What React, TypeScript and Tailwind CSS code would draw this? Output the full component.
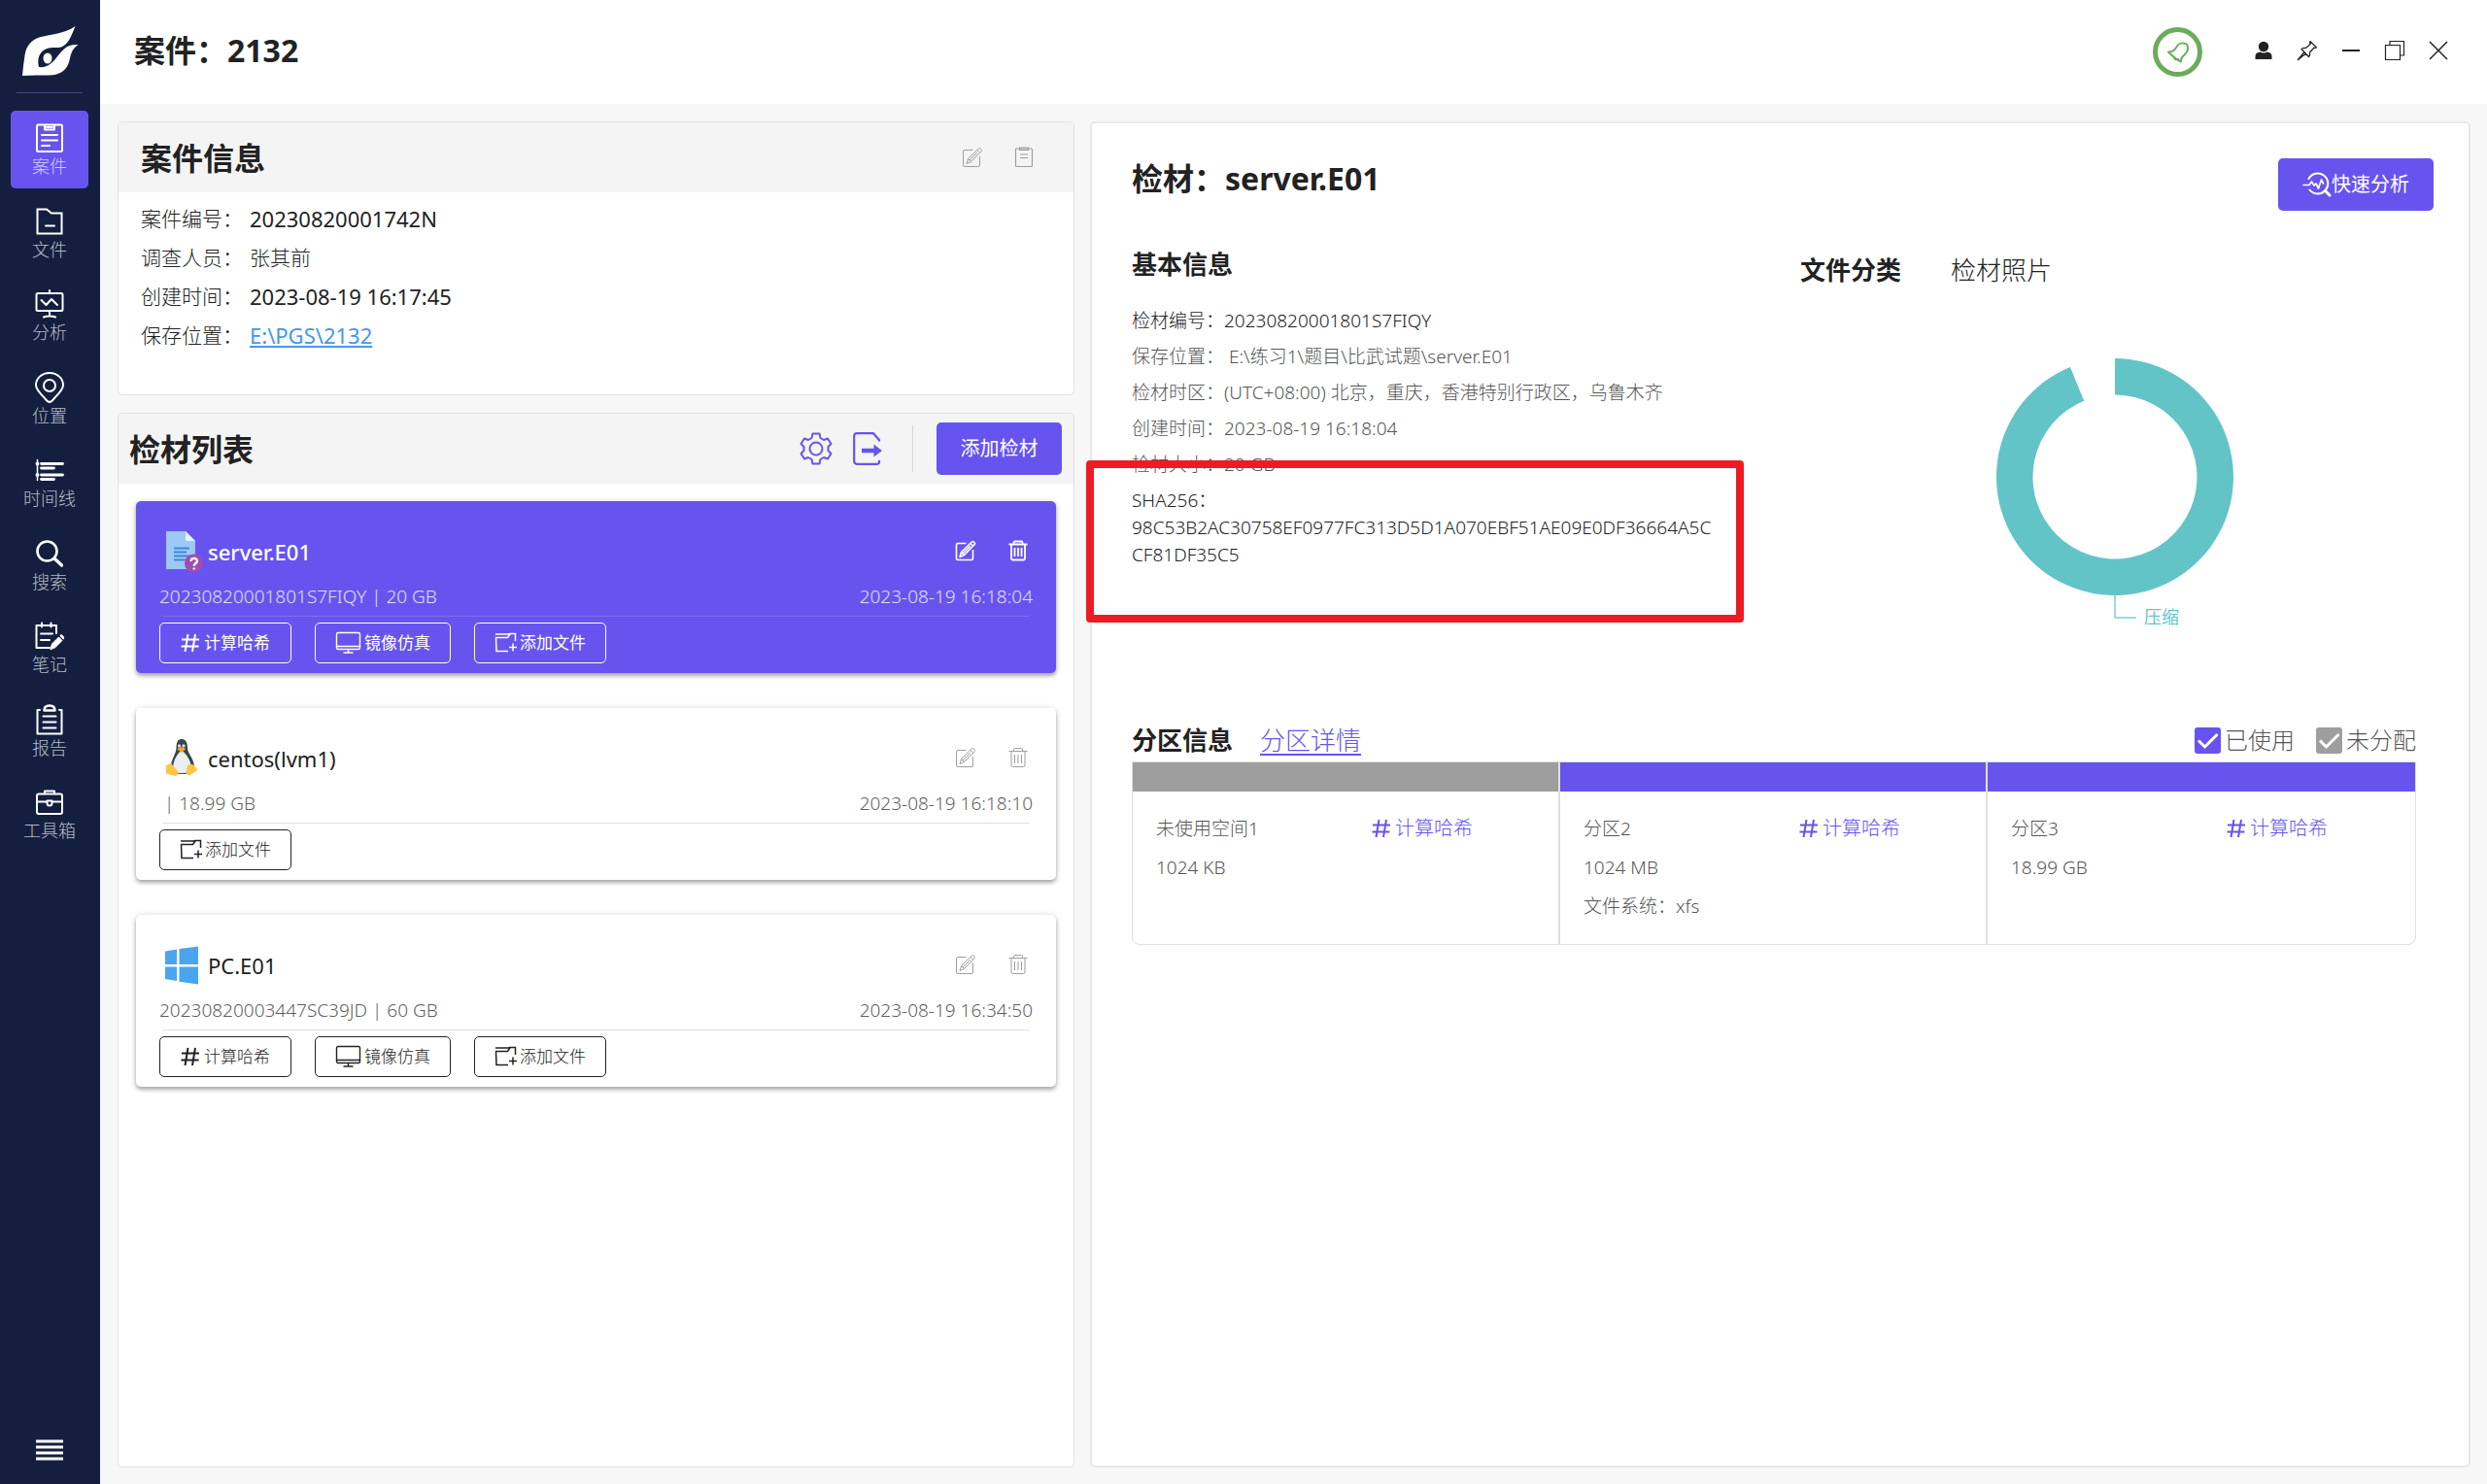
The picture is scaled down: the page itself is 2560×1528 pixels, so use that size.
import React, { useState } from 'react';

type IconProps = { className?: string };

const stroke = {
  fill: 'none',
  stroke: 'currentColor',
  strokeWidth: 2,
  strokeLinecap: 'round' as const,
  strokeLinejoin: 'round' as const,
};

function Logo() {
  return (
    <svg viewBox="0 0 58 52" className="w-[58px] h-[52px]" fill="#fff" aria-hidden="true">
      <path
        fillRule="evenodd"
        d="M54.500 0C43 8 29 8.500 19 11C9 14 4 20 2.500 30C1.300 37 0.700 44 0 51C9 50 18 50.500 27 50.500C38 50.500 45 46 48 37C50 30 50 24 57.500 19C46 18 42 24 37 30C31 38 26 43 17 42C15 34 17 25 27 22.500C33 21.500 38 23 42 20.500C49 16 51 8 54.500 0Z"
      />
      <ellipse cx="26" cy="33" rx="4.500" ry="5.500" />
    </svg>
  );
}

function CaseIcon() {
  return (
    <svg viewBox="0 0 28 30" className="w-7 h-[30px]" {...stroke}>
      <rect x="1" y="1.500" width="26" height="27.500" rx="1.500" />
      <path d="M9 2v4.500h10V2M11 4h6M6 12h16M6 17.500h16M6 23h8" />
    </svg>
  );
}

function FolderIcon() {
  return (
    <svg viewBox="0 0 28 30" className="w-7 h-[30px]" {...stroke} strokeLinejoin="miter">
      <path d="M1.500 2.500H11L16 6.500H26.500V27.500H1.500Z" />
      <path d="M10 19.500h9" strokeWidth="2" />
    </svg>
  );
}

function BoardIcon() {
  return (
    <svg viewBox="0 0 30 30" className="w-[30px] h-[30px]" {...stroke}>
      <rect x="1.500" y="4" width="27" height="18" rx="1.500" />
      <path d="M15 1v2M6.500 11l5 5 5.500-6 6 6" />
      <path d="M15 22v5M9 28.500c3-1.500 9-1.500 12 0" />
    </svg>
  );
}

function PinMapIcon() {
  return (
    <svg viewBox="0 0 30 32" className="w-[30px] h-8" {...stroke}>
      <path d="M15 31c-2 0-3-1.500-5-4C5 21.500 1 18 1 13.500C1 6.500 7 1 15 1s14 5.500 14 12.500C29 18 25 21.500 20 27c-2 2.500-3 4-5 4Z" />
      <circle cx="15" cy="14" r="6" />
    </svg>
  );
}

function TimelineIcon() {
  return (
    <svg viewBox="0 0 30 24" className="w-[30px] h-6" fill="none" stroke="currentColor" strokeLinecap="round">
      <path d="M2.500 1.500v21" strokeWidth="1.500" />
      <path d="M6.500 5.500h22M6.500 17h22" strokeWidth="2.800" />
      <path d="M6.500 10h13M6.500 21.500h13" strokeWidth="2.800" />
      <circle cx="2.500" cy="5.500" r="1.200" fill="currentColor" strokeWidth="1.500" />
      <circle cx="2.500" cy="17" r="1.200" fill="currentColor" strokeWidth="1.500" />
    </svg>
  );
}

function SearchIcon() {
  return (
    <svg viewBox="0 0 28 28" className="w-7 h-7" fill="none" stroke="currentColor" strokeLinecap="round">
      <circle cx="11.500" cy="11.500" r="10" strokeWidth="2.600" />
      <path d="M19 19l7.500 7" strokeWidth="3.400" />
    </svg>
  );
}

function NoteIcon() {
  return (
    <svg viewBox="0 0 30 30" className="w-[30px] h-[30px]" {...stroke}>
      <path d="M22 12V4H1.500V27H15" />
      <path d="M7 1.500v4M16.500 1.500v4M6 12.500h12M6 19h9" />
      <path d="M16 28.500l1.500-5.500 7-7 3.500 3.500-7 7Z" fill="currentColor" strokeWidth="1" />
      <path d="M27 14.500l2.500 2.500" strokeWidth="2.500" />
    </svg>
  );
}

function ReportIcon() {
  return (
    <svg viewBox="0 0 28 32" className="w-7 h-8" {...stroke}>
      <path d="M4 6H1.500V30.500H26.500V6H24" />
      <path d="M8.500 6.500c0-3 2-5 5.500-5s5.500 2 5.500 5Z" strokeWidth="2.500" />
      <path d="M7.500 12.500h13M7.500 18.500h13M7.500 24.500h13" />
    </svg>
  );
}

function ToolboxIcon() {
  return (
    <svg viewBox="0 0 28 26" className="w-7 h-[26px]" {...stroke}>
      <rect x="1" y="4.500" width="26" height="20.500" rx="2" />
      <path d="M9 4V1.500h10V4M1 12.500h10M17 12.500h10" />
      <path d="M11.500 11.500v2.500a2.500 2.500 0 0 0 5 0v-2.500Z" />
    </svg>
  );
}

function EditIcon({ className = '' }: IconProps) {
  return (
    <svg viewBox="0 0 22 22" className={`w-[22px] h-[22px] ${className}`} fill="none" stroke="currentColor" strokeLinejoin="round">
      <path d="M11.500 3.500H3A1.500 1.500 0 0 0 1.500 5V19A1.500 1.500 0 0 0 3 20.500H17A1.500 1.500 0 0 0 18.500 19V10" />
      <path d="M5 17.500l1.500-5L17.500 1.800c1-.9 3.800 1.500 2.800 2.700L9.500 15.500ZM16 3.500l2.800 2.700M6.500 12.500l3 3M8 14l8-8" />
    </svg>
  );
}

function ClipIcon() {
  return (
    <svg viewBox="0 0 20 22" className="w-5 h-[22px]" fill="none" stroke="currentColor" strokeWidth="1.200">
      <rect x="1.500" y="2" width="17" height="18.500" rx="1" />
      <path d="M5.500 1h9v2.500h-9ZM6 8h8M6 11.500h8" />
    </svg>
  );
}

function TrashIcon({ className = '' }: IconProps) {
  return (
    <svg viewBox="0 0 22 22" className={`w-[22px] h-[22px] ${className}`} fill="none" stroke="currentColor">
      <path d="M1.500 4.500h19M6.500 4V2.500A1 1 0 0 1 7.500 1.500h7A1 1 0 0 1 15.500 2.500V4M4 4.500V19A1.500 1.500 0 0 0 5.500 20.500h11A1.500 1.500 0 0 0 18 19V4.500M7.500 8v9M11 8v9M14.500 8v9" />
    </svg>
  );
}

function GearIcon() {
  return (
    <svg viewBox="0 0 34 34" className="w-[34px] h-[34px]" fill="none" stroke="currentColor" strokeWidth="2" strokeLinejoin="round">
      <path d="M13.500 1.500h7l1 4.500 3.500 2 4-1.500 3.500 5.500-3 3v4l3 3-3.500 5.500-4-1.500-3.500 2-1 4.500h-7l-1-4.500-3.500-2-4 1.500-3.500-5.500 3-3v-4l-3-3 3.500-5.500 4 1.500 3.500-2Z" />
      <circle cx="17" cy="17" r="6.500" />
    </svg>
  );
}

function ExportIcon() {
  return (
    <svg viewBox="0 0 30 34" className="w-[30px] h-[34px]" fill="none" stroke="currentColor" strokeWidth="2.200">
      <path d="M27 9.500V8L21 1.200H4A3 3 0 0 0 1.200 4V30A3 3 0 0 0 4 32.800H25A2 2 0 0 0 27 31V29" />
      <path d="M9 19h14" strokeWidth="4.500" />
      <path d="M21.500 12.500L30 19L21.500 25.500Z" fill="currentColor" stroke="none" />
    </svg>
  );
}

function HashIcon() {
  return (
    <svg viewBox="0 0 20 20" className="w-5 h-5 shrink-0" fill="none" stroke="currentColor" strokeWidth="2">
      <path d="M7.500 1L4.500 19M15 1L12 19M1 6.500h18M.500 13.500h18" />
    </svg>
  );
}

function MonitorIcon() {
  return (
    <svg viewBox="0 0 28 24" className="w-7 h-6 shrink-0" fill="none" stroke="currentColor" strokeWidth="1.400">
      <rect x="1.500" y="1.500" width="24" height="17" rx="1.500" />
      <path d="M2 15.500h23M13.500 18.500v3M8.500 22h10" />
    </svg>
  );
}

function FolderPlusIcon() {
  return (
    <svg viewBox="0 0 24 22" className="w-6 h-[22px] shrink-0" fill="none" stroke="currentColor" strokeWidth="1.500">
      <path d="M1 2h13L16 1.500h5.500V9M1 5.500h12.500L16 2M1.500 5.500L2 19.500H14M15 15.500h8M19 11.500v8" />
    </svg>
  );
}

function QuickIcon() {
  return (
    <svg viewBox="0 0 30 26" className="w-[30px] h-[26px] shrink-0" fill="none" stroke="currentColor" strokeWidth="2" strokeLinecap="round" strokeLinejoin="round">
      <path d="M6.500 7A10.500 10.500 0 1 1 7.500 18.500" />
      <path d="M1 13.500h6l2.500-3.500 2.500 4 2-2 2.500 5 3-9 2 4" strokeWidth="1.700" />
      <path d="M23.500 19.500l4.500 4.500" strokeWidth="3" />
    </svg>
  );
}

function DocIcon() {
  return (
    <svg viewBox="0 0 40 44" className="w-10 h-11">
      <path d="M1 1h20l10 10v29H1Z" fill="#9cc9f5" />
      <path d="M21 1l10 10H21Z" fill="#e3f2fd" />
      <path d="M9 18.500h16M9 22.500h13M9 26.500h16M9 30.500h13" stroke="#3f87d6" strokeWidth="2" />
      <circle cx="29.500" cy="34" r="9.500" fill="#a04cb4" />
      <path d="M26.500 32c0-4 6.500-4 6.500-.3 0 2.300-3.300 2.300-3.300 5M29.700 38.500v2" stroke="#fff" strokeWidth="2.300" fill="none" />
    </svg>
  );
}

function TuxIcon() {
  return (
    <svg viewBox="0 0 40 44" className="w-10 h-11">
      <path d="M17 2c4.500 0 6 4 6 9 0 6 7 11 7 20 0 5-4 7-13 7S6 35 6 30c0-7 5.500-13 5.500-19 0-5 1-9 5.500-9Z" fill="#37474f" />
      <path d="M17 14c5 3 10 11 10 18 0 4-4.500 5-10 5s-9-1-9-5c0-7 4-15 9-18Z" fill="#eceff1" />
      <circle cx="14.500" cy="9" r="1.700" fill="#cfd8dc" />
      <circle cx="19" cy="9" r="1.700" fill="#cfd8dc" />
      <path d="M12.500 12.500c2-3 6-3 8.500 0l-4 3.500Z" fill="#f5a623" />
      <path d="M6 27l7 8c1 3-1 5-3 5L1 37.500V29Z" fill="#ffc544" />
      <path d="M28 28c2 2 4 3 5 5 0 2-5 4-7 6-3 1-5-1-4-4 0-3 1-6 2-7Z" fill="#ffc544" />
    </svg>
  );
}

function WindowsIcon() {
  return (
    <svg viewBox="0 0 40 44" className="w-10 h-11" fill="#4aa5ee">
      <path d="M0 7.500L12 5.500V21H0ZM14.500 5L34 2.500V21H14.500ZM0 23.500H12V38L0 36ZM14.500 23.500H34V41.500L14.500 38.800Z" />
    </svg>
  );
}

const NAV = [
  { label: '案件', icon: <CaseIcon /> },
  { label: '文件', icon: <FolderIcon /> },
  { label: '分析', icon: <BoardIcon /> },
  { label: '位置', icon: <PinMapIcon /> },
  { label: '时间线', icon: <TimelineIcon /> },
  { label: '搜索', icon: <SearchIcon /> },
  { label: '笔记', icon: <NoteIcon /> },
  { label: '报告', icon: <ReportIcon /> },
  { label: '工具箱', icon: <ToolboxIcon /> },
];

function Sidebar() {
  const [active, setActive] = useState('案件');
  return (
    <aside className="w-[103px] pr-px shrink-0 bg-[#141f40] flex flex-col items-center">
      <div className="w-[68px] h-24 pt-[27px] pl-[2px] flex justify-center border-b border-[#454c80]">
        <Logo />
      </div>
      <nav className="mt-[18px] h-[764px] flex flex-col justify-between">
        {NAV.map((n) => (
          <button
            key={n.label}
            onClick={() => setActive(n.label)}
            className={`w-20 h-20 rounded-[5px] flex flex-col items-center text-white ${
              active === n.label ? 'bg-[#6754ee]' : ''
            }`}
          >
            <span className="h-8 mt-3 flex items-center justify-center">{n.icon}</span>
            <span className="text-[18px] leading-[26px] text-white/70 font-light">{n.label}</span>
          </button>
        ))}
      </nav>
      <button aria-label="菜单" className="mt-auto mb-6 text-white">
        <svg viewBox="0 0 28 22" className="w-7 h-[22px]" stroke="currentColor" strokeWidth="3">
          <path d="M0 2h28M0 8h28M0 14h28M0 20h28" />
        </svg>
      </button>
    </aside>
  );
}

function TopBar() {
  return (
    <header className="h-[107px] bg-white flex items-center justify-between pl-[35px] pr-[39px]">
      <h1 className="pb-[3px] text-[32px] leading-10 font-bold">案件：2132</h1>
      <div className="flex items-center">
        <button aria-label="通知" className="w-[51px] h-[51px] mr-[52px] rounded-full border-[5px] border-[#69ad5c] text-[#69ad5c] flex items-center justify-center">
          <svg viewBox="0 0 22 22" className="w-[22px] h-[22px]" {...stroke}>
            <path d="M1 10.500c4 0 6-1 8-4.500 2-4 6-5.500 10-4l1.500 1.500c1.500 4 .5 7-3 10-3 2.500-4 4-3.500 7C9 18 4.500 14 1 10.500Z" />
            <path d="M7 17c1 1.500 3 1.800 4 .8" />
          </svg>
        </button>
        <div className="flex items-center gap-[23px] -mt-1">
          <button aria-label="用户">
            <svg viewBox="0 0 22 22" className="w-[22px] h-[22px]" fill="currentColor">
              <circle cx="11" cy="7" r="5.200" />
              <path d="M2.500 20v-3c0-3 2-4 5-4.500 2 1.300 5 1.300 7 0 3 .5 5 1.500 5 4.500v3Z" />
            </svg>
          </button>
          <button aria-label="置顶">
            <svg viewBox="0 0 22 22" className="w-[22px] h-[22px]" fill="none" stroke="currentColor" strokeWidth="1.200" strokeLinejoin="round">
              <path d="M14 1.500l6.500 6.500-1.500.5-1-.5-4.500 5c.5 2 0 3.500-1 4.500L5 9.500C6.500 8.500 8 8 9.500 8.500l5-4.500-1-1ZM8 12.500l-7 8.500M9.500 14l-8.500 7" />
            </svg>
          </button>
          <button aria-label="最小化">
            <svg viewBox="0 0 22 22" className="w-[22px] h-[22px]" stroke="currentColor" strokeWidth="2">
              <path d="M2 11h18" />
            </svg>
          </button>
          <button aria-label="还原">
            <svg viewBox="0 0 22 22" className="w-[22px] h-[22px]" fill="none" stroke="currentColor" strokeWidth="1.200">
              <path d="M1.500 5.500h15v15h-15ZM6 5.500v-4h14.500V16h-4" />
            </svg>
          </button>
          <button aria-label="关闭">
            <svg viewBox="0 0 22 22" className="w-[22px] h-[22px]" stroke="currentColor" strokeWidth="1.500">
              <path d="M2 2l18 18M20 2L2 20" />
            </svg>
          </button>
        </div>
      </div>
    </header>
  );
}

const CASE_INFO = [
  { label: '案件编号：', value: '20230820001742N', className: 'text-[22px]' },
  { label: '调查人员：', value: '张其前', className: 'font-light' },
  { label: '创建时间：', value: '2023-08-19 16:17:45', className: 'text-[22px]' },
];

function CaseInfo() {
  return (
    <section className="h-[282px] bg-white border border-[#e0e0e0] rounded-[5px] overflow-hidden">
      <div className="h-[72px] bg-[#f4f4f4] pl-[23px] pr-[41px] flex items-center justify-between">
        <h2 className="pt-[2px] text-[32px] leading-10 font-bold">案件信息</h2>
        <div className="flex items-center gap-8 text-[#9e9e9e]">
          <button aria-label="编辑案件"><EditIcon /></button>
          <button aria-label="案件详情"><ClipIcon /></button>
        </div>
      </div>
      <dl className="pl-[23px] pt-[7px] grid grid-cols-[112px_1fr] text-[21px] leading-10">
        {CASE_INFO.map((r) => (
          <React.Fragment key={r.label}>
            <dt className="font-light">{r.label}</dt>
            <dd className={`leading-10 ${r.className}`}>{r.value}</dd>
          </React.Fragment>
        ))}
        <dt className="font-light">保存位置：</dt>
        <dd className="text-[22px] leading-10">
          <a href="#folder" className="text-[#4596ee] underline underline-offset-2 decoration-2">E:\PGS\2132</a>
        </dd>
      </dl>
    </section>
  );
}

interface Evidence {
  name: string;
  meta: string;
  time: string;
  icon: React.ReactNode;
  actions: string[];
}

const EVIDENCE: Evidence[] = [
  {
    name: 'server.E01',
    meta: '20230820001801S7FIQY | 20 GB',
    time: '2023-08-19 16:18:04',
    icon: <DocIcon />,
    actions: ['hash', 'sim', 'add'],
  },
  {
    name: 'centos(lvm1)',
    meta: '\u00a0| 18.99 GB',
    time: '2023-08-19 16:18:10',
    icon: <TuxIcon />,
    actions: ['add'],
  },
  {
    name: 'PC.E01',
    meta: '20230820003447SC39JD | 60 GB',
    time: '2023-08-19 16:34:50',
    icon: <WindowsIcon />,
    actions: ['hash', 'sim', 'add'],
  },
];

const ACTIONS: Record<string, { label: string; icon: React.ReactNode; className: string }> = {
  hash: { label: '计算哈希', icon: <HashIcon />, className: 'w-[136px] gap-1' },
  sim: { label: '镜像仿真', icon: <MonitorIcon />, className: 'w-[140px] gap-[2px]' },
  add: { label: '添加文件', icon: <FolderPlusIcon />, className: 'w-[136px] gap-[2px]' },
};

function EvidenceCard({ item, selected, onSelect }: { item: Evidence; selected: boolean; onSelect: () => void }) {
  return (
    <li
      onClick={onSelect}
      className={`h-[177px] rounded-[5px] px-6 shadow-[0_3px_4px_rgba(0,0,0,0.3),0_0_6px_rgba(0,0,0,0.12)] ${
        selected ? 'bg-[#6754ee] text-white' : 'bg-white'
      }`}
    >
      <div className="h-[82px] pt-[22px] pl-[6px] pr-1 flex items-center">
        {item.icon}
        <h3 className={`ml-1 text-[22px] leading-8 ${selected ? 'font-medium' : ''}`}>{item.name}</h3>
        <div className={`ml-auto flex gap-8 -mt-[2px] ${selected ? '' : 'text-[#9e9e9e]'}`}>
          <button aria-label={`编辑 ${item.name}`}>
            <EditIcon className={selected ? 'stroke-[1.6]' : ''} />
          </button>
          <button aria-label={`删除 ${item.name}`}>
            <TrashIcon className={selected ? 'stroke-[1.8]' : ''} />
          </button>
        </div>
      </div>
      <div className={`h-9 pb-1 flex items-center justify-between text-[19px] leading-7 font-light ${selected ? 'text-white/80' : 'text-[#5f5f5f]'}`}>
        <span>{item.meta}</span>
        <span>{item.time}</span>
      </div>
      <div className={`mx-1 border-t ${selected ? 'border-white/15' : 'border-[#dcdcdc]'}`} />
      <div className="mt-[6px] flex gap-6">
        {item.actions.map((a) => (
          <button
            key={a}
            className={`h-[42px] rounded-[5px] border flex items-center justify-center text-[17px] leading-6 ${ACTIONS[a].className} ${
              selected ? 'border-white' : 'border-[#222] font-light'
            }`}
          >
            {ACTIONS[a].icon}
            {ACTIONS[a].label}
          </button>
        ))}
      </div>
    </li>
  );
}

function EvidenceList() {
  const [selected, setSelected] = useState('server.E01');
  return (
    <section className="grow bg-white border border-[#e0e0e0] rounded-[5px] overflow-hidden">
      <div className="h-[72px] bg-[#f4f4f4] pl-[11px] pr-3 flex items-center">
        <h2 className="pt-[2px] text-[32px] leading-10 font-bold">检材列表</h2>
        <div className="ml-auto flex items-center text-[#6754ee]">
          <button aria-label="设置"><GearIcon /></button>
          <button aria-label="导出" className="ml-[21px]"><ExportIcon /></button>
          <div className="ml-[31px] mr-6 w-px h-12 bg-[#d8d8d8]" />
          <button className="w-[129px] h-[54px] rounded-[5px] bg-[#6754ee] text-white text-[20px]">添加检材</button>
        </div>
      </div>
      <ul className="p-[18px] flex flex-col gap-9">
        {EVIDENCE.map((e) => (
          <EvidenceCard key={e.name} item={e} selected={selected === e.name} onSelect={() => setSelected(e.name)} />
        ))}
      </ul>
    </section>
  );
}

function FileChart() {
  // Single category ring, drawn clockwise from 12 o'clock to 338 degrees.
  return (
    <svg viewBox="0 0 260 290" className="w-[260px] h-[290px]" role="img" aria-label="文件分类">
      <path
        d="M125 3A122 122 0 1 1 79 12L93.200 46.700A84.500 84.500 0 1 0 125 40.500Z"
        fill="#63c4c7"
      />
      <path d="M125 247v23h22" fill="none" stroke="#7fd0d2" strokeWidth="1.500" />
      <text x="155" y="276" fontSize="18" fill="#63c4c7">压缩</text>
    </svg>
  );
}

const BASIC_INFO = [
  { label: '检材编号：', value: '20230820001801S7FIQY', strong: true },
  { label: '保存位置：', value: '\u00a0E:\\练习1\\题目\\比武试题\\server.E01' },
  { label: '检材时区：', value: '(UTC+08:00) 北京，重庆，香港特别行政区，乌鲁木齐' },
  { label: '创建时间：', value: '2023-08-19 16:18:04' },
  { label: '检材大小：', value: '20 GB' },
];

function BasicInfo() {
  return (
    <div className="w-[688px] shrink-0">
      <h3 className="text-[26px] leading-9 font-bold">基本信息</h3>
      <div className="mt-[22px] text-[19px] text-[#555] font-light">
        {BASIC_INFO.map((r) => (
          <p key={r.label} className={`leading-[37px] ${r.strong ? 'text-[#222]' : ''}`}>
            {r.label}
            {r.value}
          </p>
        ))}
        <div className="relative mt-1 w-[602px] leading-7 text-[#222] break-all">
          SHA256：
          <br />
          98C53B2AC30758EF0977FC313D5D1A070EBF51AE09E0DF36664A5CCF81DF35C5
          {/* highlight frame around the digest */}
          <div className="absolute -left-[47px] -top-[27px] w-[677px] h-[167px] border-8 border-[#ed1c24] rounded-[4px] pointer-events-none" />
        </div>
      </div>
    </div>
  );
}

const PARTITIONS = [
  { lines: ['未使用空间1', '1024 KB'], used: false },
  { lines: ['分区2', '1024 MB', '文件系统：xfs'], used: true },
  { lines: ['分区3', '18.99 GB'], used: true },
];

function Check({ label, className }: { label: string; className: string }) {
  return (
    <label className="flex items-center gap-1">
      <span className="relative flex">
        <input type="checkbox" defaultChecked className={`peer appearance-none w-[27px] h-[27px] rounded-[3px] border-2 ${className}`} />
        <svg viewBox="0 0 27 27" className="absolute inset-0 w-[27px] h-[27px] opacity-0 peer-checked:opacity-100 pointer-events-none" fill="none" stroke="#fff" strokeWidth="3">
          <path d="M4 13.500l6.500 6.500L23.500 7" />
        </svg>
      </span>
      {label}
    </label>
  );
}

function Partitions() {
  return (
    <div className="mt-[86px]">
      <div className="h-10 mb-[2px] flex items-center">
        <h3 className="text-[26px] leading-9 font-bold">分区信息</h3>
        <a href="#partitions" className="ml-7 text-[26px] leading-9 font-light text-[#6754ee] underline underline-offset-4 decoration-2">分区详情</a>
        <div className="ml-auto flex gap-[22px] text-[24px] leading-9 font-light text-[#555]">
          <Check label="已使用" className="border-[#6754ee] checked:bg-[#6754ee]" />
          <Check label="未分配" className="border-[#9e9e9e] checked:bg-[#9e9e9e]" />
        </div>
      </div>
      <div className="h-[189px] grid grid-cols-3 border border-[#e0e0e0] rounded-b-[8px] divide-x-2 divide-[#e0e0e0] overflow-hidden">
        {PARTITIONS.map((p) => (
          <div key={p.lines[0]}>
            <div className={`h-[30px] ${p.used ? 'bg-[#6754ee]' : 'bg-[#9e9e9e]'}`} />
            <div className="pt-[18px] pl-6 flex text-[19px] leading-10 font-light text-[#555]">
              <div className="w-[222px]">
                {p.lines.map((l) => (
                  <p key={l}>{l}</p>
                ))}
              </div>
              <button className="h-10 flex items-center gap-1 text-[20px] leading-10 text-[#6754ee]">
                <HashIcon />
                计算哈希
              </button>
            </div>
          </div>
        ))}
      </div>
    </div>
  );
}

function Detail() {
  return (
    <section className="bg-white border-2 border-[#e8e8e8] rounded-[5px] pl-[41px] pr-[54px]">
      <div className="pt-9 flex justify-between">
        <h2 className="text-[32px] leading-[42px] font-bold">检材：server.E01</h2>
        <button className="mr-[-18px] w-[160px] h-[54px] rounded-[5px] bg-[#6754ee] text-white text-[20px] flex items-center justify-center">
          <QuickIcon />
          快速分析
        </button>
      </div>
      <div className="mt-[37px] flex">
        <BasicInfo />
        <div className="grow pt-[6px]">
          <div className="flex gap-[51px] text-[26px] leading-9">
            <button className="font-bold">文件分类</button>
            <button className="font-light">检材照片</button>
          </div>
          <div className="mt-[70px] pl-6 flex justify-center">
            <FileChart />
          </div>
        </div>
      </div>
      <Partitions />
    </section>
  );
}

export default function App() {
  return (
    <div className="min-h-screen flex bg-[#f7f7f7] text-[#222] font-['Noto_Sans','Noto_Sans_CJK_SC',sans-serif]">
      <Sidebar />
      <div className="grow flex flex-col">
        <TopBar />
        <main className="grow grid grid-cols-[985fr_1421fr] gap-4 p-[18px] pr-[17px] pb-[17px]">
          <div className="flex flex-col gap-[18px]">
            <CaseInfo />
            <EvidenceList />
          </div>
          <Detail />
        </main>
      </div>
    </div>
  );
}
